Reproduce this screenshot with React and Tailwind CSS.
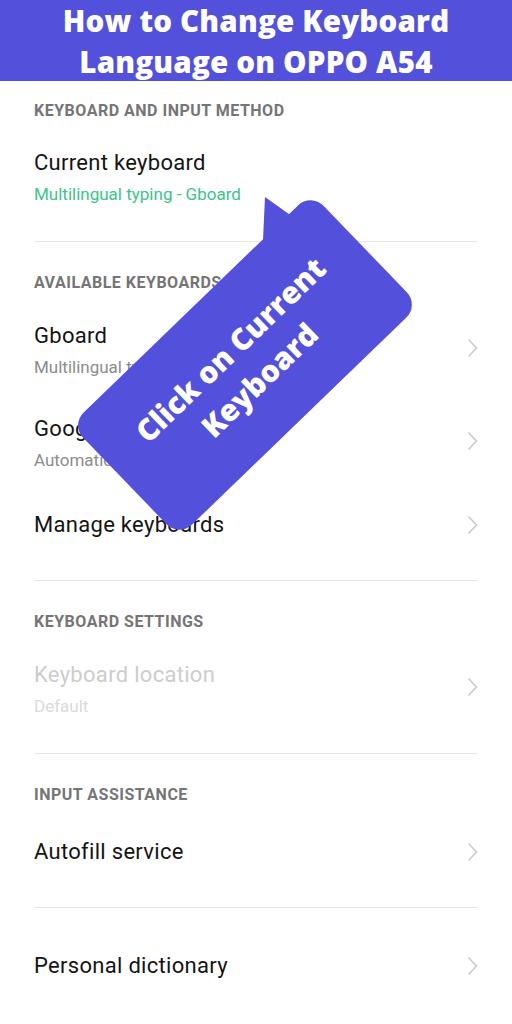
import React from 'react';

const Chevron = ({ className = '' }) => (
    <svg width="11" height="20" viewBox="0 0 11 20" className={`shrink-0 ${className}`}>
        <polyline points="1.5,1.5 9.5,10 1.5,18.5" fill="none" stroke="#cbcbcb" strokeWidth="1.6" />
    </svg>
);

const SectionLabel = ({ children, className = '' }) => (
    <p className={`text-[16px] leading-5 font-bold text-[#757575] tracking-[0.5px] ${className}`}>{children}</p>
);

const Item = ({ title, subtitle, subColor = 'text-[#8c8c8c]', titleColor = 'text-[#141414]', arrow = true, className = '' }) => (
    <div className={`flex items-center justify-between ${className}`}>
        <div>
            <p className={`text-[22px] leading-7 tracking-[0.3px] ${titleColor}`}>{title}</p>
            {subtitle && <p className={`mt-[3px] text-[17px] leading-7 ${subColor}`}>{subtitle}</p>}
        </div>
        {arrow && <Chevron className={subtitle ? 'mb-[7px]' : ''} />}
    </div>
);

const Divider = () => <div className="h-px bg-[#e6e6e6]" />;

const App = () => {
    return (
        <section className="relative w-[512px] h-[1024px] bg-white overflow-hidden font-['Roboto',sans-serif]">
            <header className="h-[81px] bg-[#5350dc] flex flex-col items-center justify-center font-['Open_Sans',sans-serif] text-white font-extrabold text-[29.5px] leading-[41px] tracking-[0.2px]">
                <h1>How to Change Keyboard</h1>
                <h1>Language on OPPO A54</h1>
            </header>

            <div className="pl-[34px] pr-[34px]">
                <SectionLabel className="pt-[20px]">KEYBOARD AND INPUT METHOD</SectionLabel>
                <Item className="mt-[28px] mb-[33px]" title="Current keyboard" subtitle="Multilingual typing - Gboard" subColor="text-[#3cc48a]" arrow={false} />
                <Divider />

                <SectionLabel className="pt-[31px]">AVAILABLE KEYBOARDS</SectionLabel>
                <Item className="mt-[29px]" title="Gboard" subtitle="Multilingual typing" />
                <Item className="mt-[34px]" title="Google voice typing" subtitle="Automatic" />
                <Item className="mt-[37px] mb-[41px]" title="Manage keyboards" />
                <Divider />

                <SectionLabel className="pt-[31px]">KEYBOARD SETTINGS</SectionLabel>
                <Item className="mt-[29px] mb-[33px]" title="Keyboard location" subtitle="Default" titleColor="text-[#cdcdcd]" subColor="text-[#dadada]" />
                <Divider />

                <SectionLabel className="pt-[31px]">INPUT ASSISTANCE</SectionLabel>
                <Item className="mt-[33px] mb-[41px]" title="Autofill service" />
                <Divider />

                <Item className="mt-[44px]" title="Personal dictionary" />
            </div>

            {/* callout bubble */}
            <svg className="absolute left-0 top-0" width="512" height="600">
                <polygon points="265,197 262,262 300,222" fill="#5350dc" />
            </svg>
            <div className="absolute left-[78px] top-[287px] w-[334px] h-[156px] rounded-[18px] bg-[#5350dc] -rotate-[44deg] flex flex-col items-center justify-center font-['Open_Sans',sans-serif] font-extrabold text-white text-[30px] leading-[42px]">
                <span>Click on Current</span>
                <span>Keyboard</span>
            </div>
        </section>
    );
};

export default App;
